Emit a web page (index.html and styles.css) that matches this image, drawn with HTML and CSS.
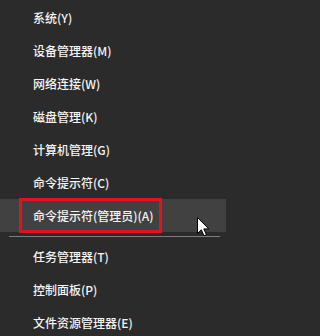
FILE: index.html
```html
<!DOCTYPE html>
<html lang="zh-CN">
<head>
<meta charset="utf-8">
<link rel="stylesheet" href="styles.css">
</head>
<body>
<div class="menu">
  <div class="item">系统(Y)</div>
  <div class="item">设备管理器(M)</div>
  <div class="item">网络连接(W)</div>
  <div class="item">磁盘管理(K)</div>
  <div class="item">计算机管理(G)</div>
  <div class="item">命令提示符(C)</div>
  <div class="item item-hover">命令提示符(管理员)(A)<span class="mark"></span>
    <svg class="cursor" width="13" height="20" viewBox="0 0 13 20"><path d="M0.5 0.5 L0.5 16.5 L4.3 12.8 L7 18.8 L9.4 17.8 L6.8 11.9 L11.8 11.9 Z" fill="#fff" stroke="#000" stroke-width="1"/></svg>
  </div>
  <div class="sep"></div>
  <div class="item">任务管理器(T)</div>
  <div class="item">控制面板(P)</div>
  <div class="item">文件资源管理器(E)</div>
</div>
</body>
</html>
```
FILE: styles.css
```css
html, body {
  margin: 0;
  padding: 0;
  background: #2b2b2b;
}
.menu {
  width: 226px;
  height: 336px;
  padding-top: 1px;
  box-sizing: border-box;
  font-family: "Noto Sans CJK SC", "Microsoft YaHei", sans-serif;
  font-size: 12px;
  font-weight: 500;
  color: #f4f4f4;
  overflow: hidden;
}
.item {
  position: relative;
  height: 33px;
  line-height: 33px;
  padding-left: 33px;
  white-space: nowrap;
}
.item-hover {
  background: #414141;
}
.mark {
  position: absolute;
  left: 19px;
  top: -1px;
  width: 143px;
  height: 35px;
  box-sizing: border-box;
  border: 3px solid #e3121b;
}
.cursor {
  position: absolute;
  left: 197px;
  top: 18px;
}
.sep {
  height: 8px;
  display: flex;
  align-items: center;
  padding: 0 6px 0 9px;
}
.sep::before {
  content: "";
  flex: 1;
  height: 1px;
  background: #7d7d7d;
}
```
